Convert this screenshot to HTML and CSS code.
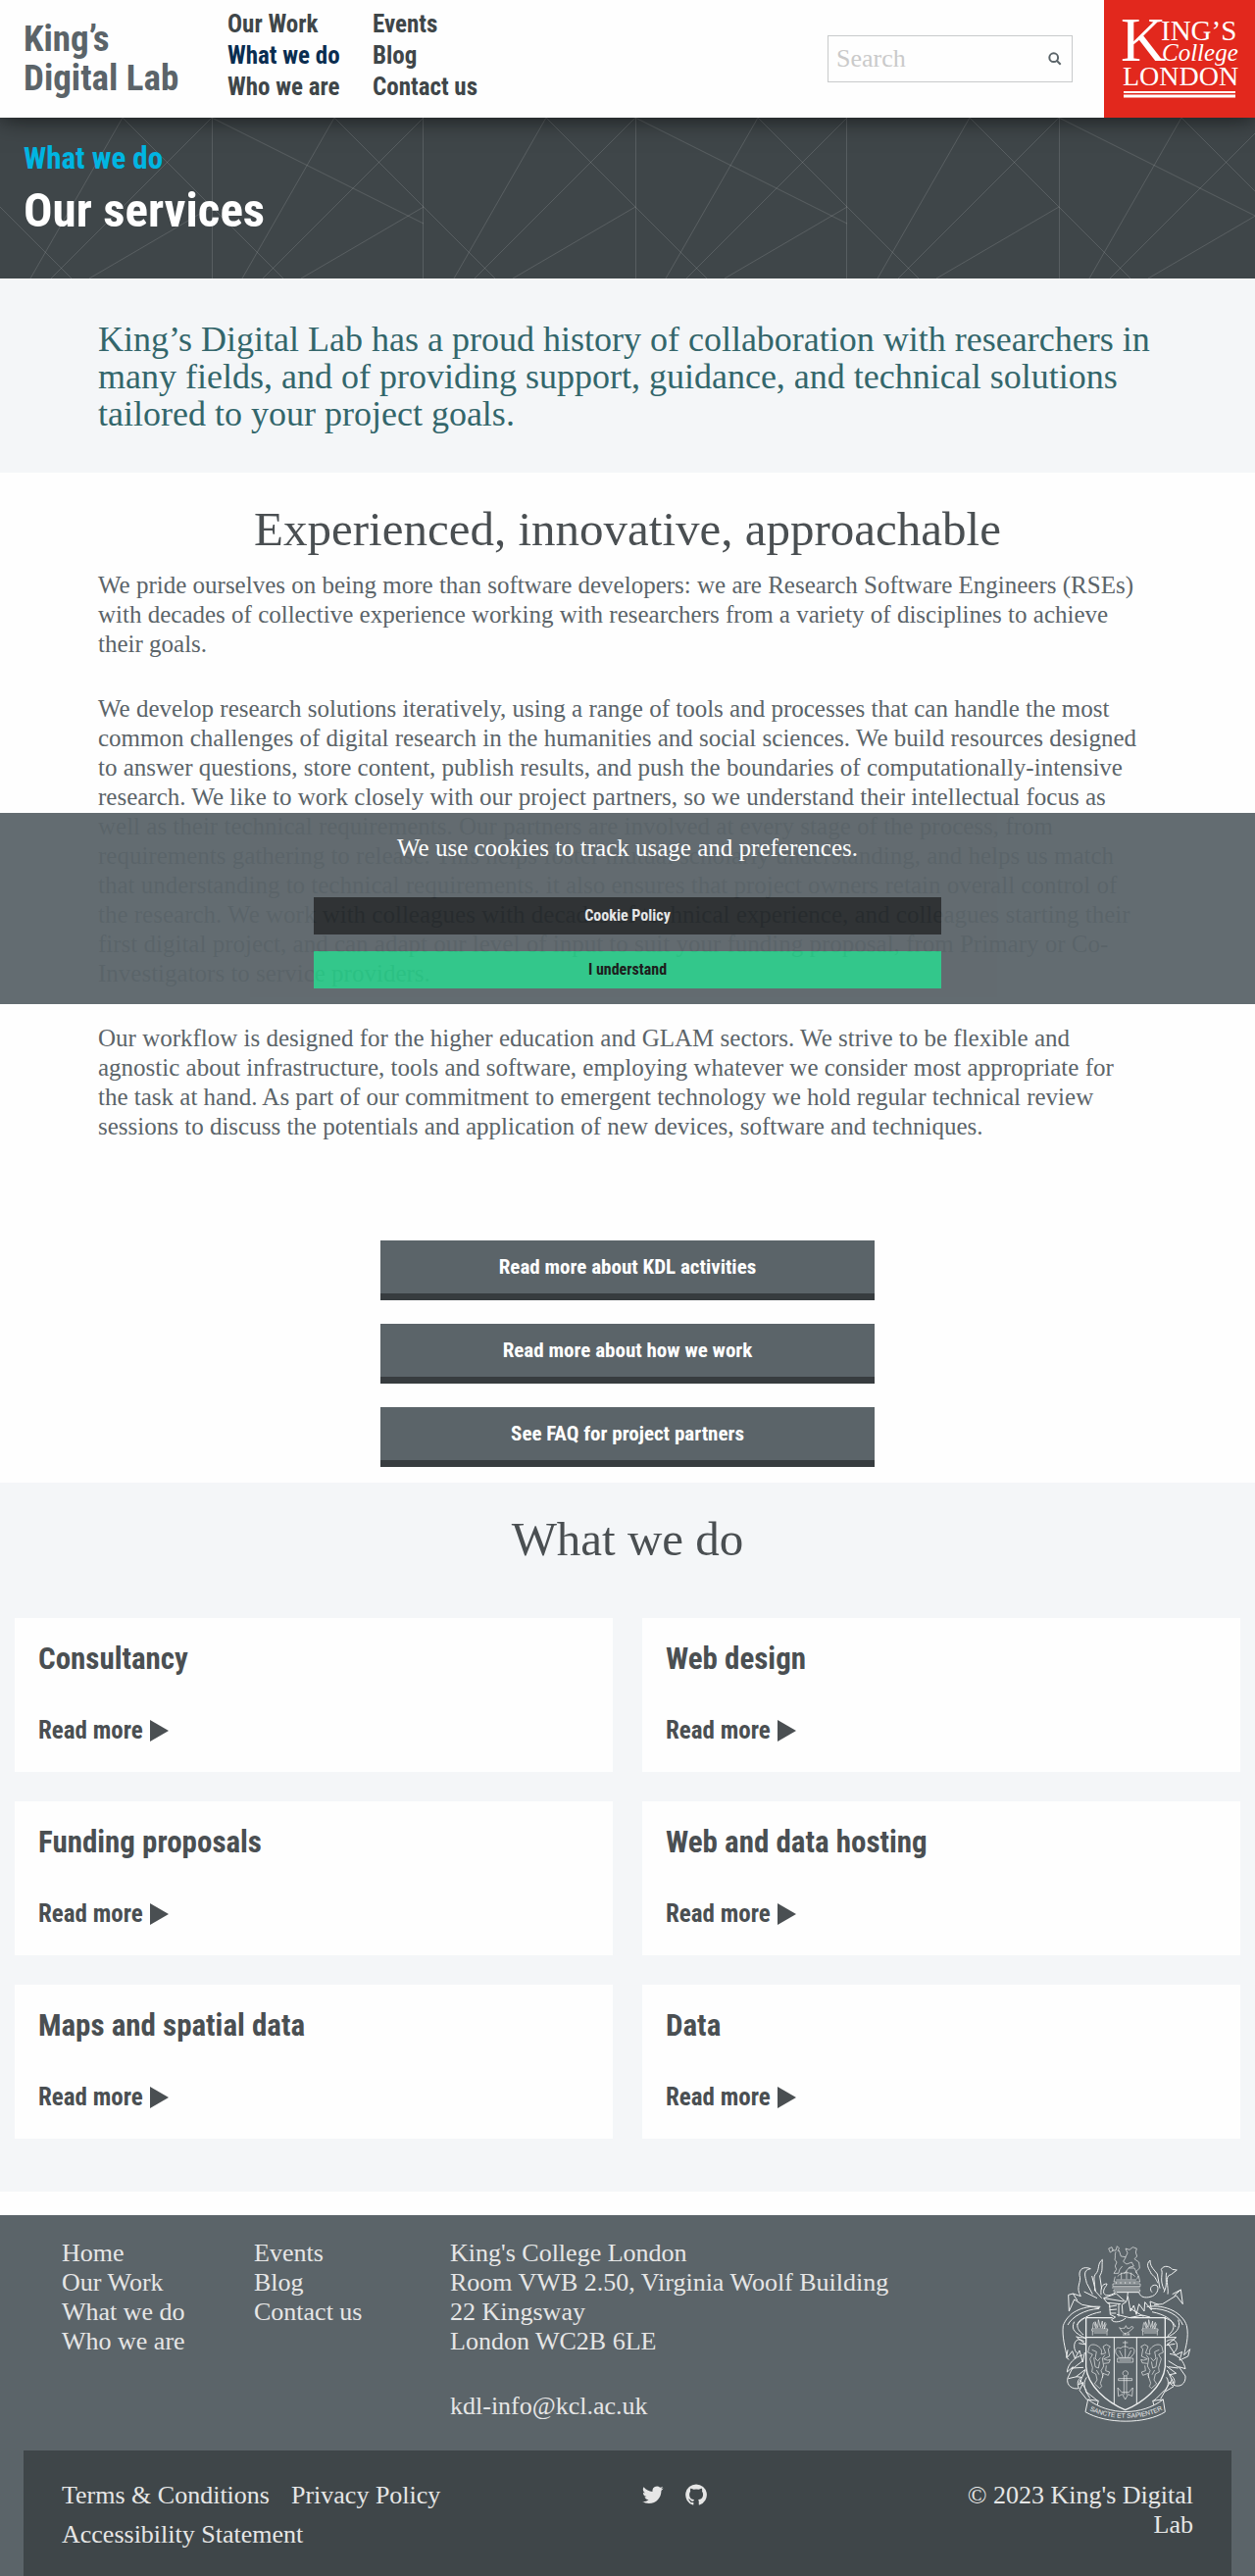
FILE: index.html
```html
<!DOCTYPE html>
<html lang="en">
<head>
<meta charset="utf-8">
<meta name="viewport" content="width=device-width, initial-scale=1">
<title>Our services | King’s Digital Lab</title>
<link rel="stylesheet" href="styles.css">
</head>
<body>
<header class="site-header">
  <a class="brand" href="#">King’s<br>Digital Lab</a>
  <nav class="main-nav" aria-label="Main">
    <ul>
      <li><a href="#">Our Work</a></li>
      <li><a class="current" href="#" aria-current="page">What we do</a></li>
      <li><a href="#">Who we are</a></li>
    </ul>
    <ul>
      <li><a href="#">Events</a></li>
      <li><a href="#">Blog</a></li>
      <li><a href="#">Contact us</a></li>
    </ul>
  </nav>
  <form class="search" role="search">
    <input type="search" placeholder="Search" aria-label="Search">
    <button type="submit" aria-label="Submit search">
      <svg width="14" height="14" viewBox="0 0 14 14" aria-hidden="true"><circle cx="5.7" cy="5.7" r="4.4"/><path d="M9 9l3.7 3.7"/></svg>
    </button>
  </form>
  <a class="college" href="#" aria-label="King’s College London">
    <svg viewBox="0 0 154 120" aria-hidden="true">
      <text x="17" y="62" font-size="64">K</text>
      <text x="58" y="41" font-size="29">ING’S</text>
      <text x="59" y="62" font-size="25" font-style="italic">College</text>
      <text x="19" y="87" font-size="28">LONDON</text>
      <path d="M20 94h114" stroke="#fff" stroke-width="2"/>
      <path d="M20 98h114" stroke="#fff" stroke-width="3"/>
    </svg>
  </a>
</header>

<main>
  <div class="banner">
    <a class="crumb" href="#">What we do</a>
    <h1>Our services</h1>
  </div>

  <section class="intro">
    <p>King’s Digital Lab has a proud history of collaboration with researchers in many fields, and of providing support, guidance, and technical solutions tailored to your project goals.</p>
  </section>

  <section class="story">
    <h2>Experienced, innovative, approachable</h2>
    <p>We pride ourselves on being more than software developers: we are Research Software Engineers (RSEs) with decades of collective experience working with researchers from a variety of disciplines to achieve their goals.</p>
    <p>We develop research solutions iteratively, using a range of tools and processes that can handle the most common challenges of digital research in the humanities and social sciences. We build resources designed to answer questions, store content, publish results, and push the boundaries of computationally-intensive research. We like to work closely with our project partners, so we understand their intellectual focus as well as their technical requirements. Our partners are involved at every stage of the process, from requirements gathering to release. This helps foster mutual scholarly understanding, and helps us match that understanding to technical requirements. it also ensures that project owners retain overall control of the research. We work with colleagues with decades of technical experience, and colleagues starting their first digital project, and can adapt our level of input to suit your funding proposal, from Primary or Co-Investigators to service providers.</p>
    <p>Our workflow is designed for the higher education and GLAM sectors. We strive to be flexible and agnostic about infrastructure, tools and software, employing whatever we consider most appropriate for the task at hand. As part of our commitment to emergent technology we hold regular technical review sessions to discuss the potentials and application of new devices, software and techniques.</p>
    <div class="actions">
      <a href="#">Read more about KDL activities</a>
      <a href="#">Read more about how we work</a>
      <a href="#">See FAQ for project partners</a>
    </div>
  </section>

  <section class="services">
    <h2>What we do</h2>
    <div class="cards">
      <article><h3>Consultancy</h3><a href="#">Read more <svg viewBox="0 0 19 22" aria-hidden="true"><path d="M0 0l19 11L0 22z"/></svg></a></article>
      <article><h3>Web design</h3><a href="#">Read more <svg viewBox="0 0 19 22" aria-hidden="true"><path d="M0 0l19 11L0 22z"/></svg></a></article>
      <article><h3>Funding proposals</h3><a href="#">Read more <svg viewBox="0 0 19 22" aria-hidden="true"><path d="M0 0l19 11L0 22z"/></svg></a></article>
      <article><h3>Web and data hosting</h3><a href="#">Read more <svg viewBox="0 0 19 22" aria-hidden="true"><path d="M0 0l19 11L0 22z"/></svg></a></article>
      <article><h3>Maps and spatial data</h3><a href="#">Read more <svg viewBox="0 0 19 22" aria-hidden="true"><path d="M0 0l19 11L0 22z"/></svg></a></article>
      <article><h3>Data</h3><a href="#">Read more <svg viewBox="0 0 19 22" aria-hidden="true"><path d="M0 0l19 11L0 22z"/></svg></a></article>
    </div>
  </section>
</main>

<footer class="site-footer">
  <div class="footer-top">
    <ul>
      <li><a href="#">Home</a></li>
      <li><a href="#">Our Work</a></li>
      <li><a href="#">What we do</a></li>
      <li><a href="#">Who we are</a></li>
    </ul>
    <ul>
      <li><a href="#">Events</a></li>
      <li><a href="#">Blog</a></li>
      <li><a href="#">Contact us</a></li>
    </ul>
    <address>
      <p>King's College London<br>Room VWB 2.50, Virginia Woolf Building<br>22 Kingsway<br>London WC2B 6LE</p>
      <p><a href="#">kdl-info@kcl.ac.uk</a></p>
    </address>
    <svg class="crest" viewBox="40 26 396 546" role="img" aria-label="King’s College London coat of arms">
      <!-- lion crest and crown -->
      <path class="fine" d="M183 38l10-4 4 10-9 6zM193 44h12l4-13 6 6-4 10M205 48c-4 10 0 14-3 24l6 8-5 12 4 10-8 12h14l4-12 8-10M215 44l6 18 14 2 6-12-6-14 12 4 10-8 12 4-3 12 4 12-8 8M236 64l-8 14 10 8 16-6 6 12-14 4-16 20M262 70l14 10 2 18-12 12 8 10-4 12M244 98h18l8 16M210 124c12-16 42-16 54 0M222 112v20M238 106v26M252 112v20M206 134h62"/>
      <path class="fine" d="M203 124l-4 16h80l-4-18M196 146h84v8h-84zM193 158h86M199 164h80v6h-80zM206 140v6M220 140v6M234 140v6M248 140v6M262 140v6"/>
      <!-- helmet -->
      <path d="M208 172h68M206 176l-38 14 10 14 8 4 2 32 16 8-12 8c6 12 34 6 44-6M168 190l62 10M178 204l42 4M206 176l30 26M184 216l24-4M186 226l22-2M188 236l18 0M236 202c6-10 4-18 6-30M236 202l-12 8 2 28M214 208v38"/>
      <path d="M276 172c4 16 20 18 34 14M242 184l8 46 10-18 8 28 8-32 16 22 2-28 20 24-4-26 26 10M250 222l40 24M208 240l40 10M246 250l40-8 24 6"/>
      <!-- mantling, dexter -->
      <path d="M204 172c-16 12-32 12-36 2-2-16 10-20 10-28-14 0-20 10-18 34M164 72c-18 14-6 30-22 46-8 12 2 30-2 50M164 72c-2 26 2 34-8 50l6 40M128 100c-20-8-36 0-34 20 8 20-14 36 4 64M128 100c-26 4-16 24-12 44l18 34M132 122l12 48 18 20M98 184l-24-8-14 4 2 50 16-36 24 16 54 10M74 176l14 22M148 190l-40-20M158 216c-60-4-100 20-114 58-4 34 6 66 12 98l16-20 8 22 14-24 10 36 6-30M154 222c-44 2-84 26-96 50M160 232c-36 6-60 22-74 40M110 250c-26 10-32 30-4 52M78 262c-12 24 4 36 34 50-10-2-22-2-28-4l30 24-22-4M108 322c-30-20-38 20-22 36M62 378l-8-6 4-24"/>
      <path d="M104 364c-24 6-46 26-48 52l18-16-16 34c-6 24 16 36 34 32-6-14-4-28 8-34l-16-2 28-22M106 380l-36 28M112 410l-20 44 14-6-12 24 24 30M116 432c-10 14-8 28-2 44l12 20M96 440l20 34M112 474l30 24 8 6M72 404l34-2M60 436l26-6"/>
      <!-- mantling, sinister -->
      <path d="M310 186c24-4 30-32 18-36-14-2-22 12-12 22M310 74c-16 14-2 28 4 42 14 10 16 22 20 28M310 74c0 18 8 24 22 42l8 44M344 102c8-14 26-10 34 0l14 2-18 14c-22 2-6 40-10 60M344 102c8 12-8 30 10 64M360 112c-4 20 4 38-8 60M378 178l26-14 6 44-20-26-42 26-26 2M404 164l-20 18M300 216c60-8 110 20 122 58 8 36-4 66-8 90l18-18-6 22-26 12 8-26-20 10-24-36M310 222c52-2 90 22 100 50M316 232c40 8 62 24 72 46M352 250c34 8 40 34 12 54M396 256c10 26-8 44-38 54l32 0-30 24 26-4M360 322c32-20 44 22 20 36"/>
      <path d="M370 360c30 4 44 26 48 46l-20-6 20 28c2 24-16 36-36 28 8-14-2-28-12-32l20-4-30-22M366 382l32 20M362 410l20 40-14-2 14 12-26 16M360 432c10 14 4 30-4 42l-14 24M378 438l-24 36M354 472l-26 26-8 6M396 404l-30-4"/>
      <!-- shield -->
      <path class="bold" d="M115 250h80M250 250h106v150c-6 62-70 110-122 132-56-24-116-74-120-132V250M115 310h241"/>
      <path d="M200 310v204M269 310v204"/>
      <path class="fine" d="M132 284h48v6h-48zM134 290v14M178 290v14M138 296h38M134 284c2-10 0-14 4-20l6 18M146 282l-4-20 8 18 2-24 6 24 6-20v22l8-18-2 20 6-16M286 284h48v6h-48zM288 290v14M332 290v14M292 296h38M288 284c2-10 0-14 4-20l6 18M300 282l-4-20 8 18 2-24 6 24 6-20v22l8-18-2 20 6-16M216 280c6 6 10 0 16 2l4-8 4 8h8c4-8 12-6 10 0l-14 12c-10 6-16 4-20-2zM226 302h22M234 296v6M244 296v6"/>
      <path class="fine" d="M206 360c-6-16 4-22 14-16 4-8 20-8 26 0 12-6 20 2 14 16l-10 12h-34zM210 374h48v12h-48zM226 326h16M234 320v22M234 344v28M216 350l10 20M252 350l-10 20M216 380h36M234 412a8 8 0 1 0 1 0M230 428v58M238 428v58M213 436h42v6h-42zM211 464l2 26 12-6 9 16 9-16 12 6 2-26-12 14h-22z"/>
      <path class="fine" d="M124 338c4-8 18-8 28 0 8 6 12 12 8 24l14-4-8-20 10-6 12 6-6 8 4 22-18 8 12 4 8-2-4 10-16 2M124 338l-4 18 14 6-8 14 8 26-2 14 12 6 4 18-8 12 16 14 6-6-4-10 8-24-6-14 8-14-4-24 8-10M132 348l14 6-4 20 8 8 8-10M138 372l4 28 10 4 4-20M146 410l8 14M176 396l-2 16 12 4-4 10-16-6-2 14"/>
      <g transform="translate(470 0) scale(-1 1)"><path class="fine" d="M124 338c4-8 18-8 28 0 8 6 12 12 8 24l14-4-8-20 10-6 12 6-6 8 4 22-18 8 12 4 8-2-4 10-16 2M124 338l-4 18 14 6-8 14 8 26-2 14 12 6 4 18-8 12 16 14 6-6-4-10 8-24-6-14 8-14-4-24 8-10M132 348l14 6-4 20 8 8 8-10M138 372l4 28 10 4 4-20M146 410l8 14M176 396l-2 16 12 4-4 10-16-6-2 14"/></g>
      <!-- motto ribbon -->
      <path d="M120 500c66 50 164 50 230 0l6 38c-60 38-180 38-244 0zM120 500l32 4-4 14M350 500l-32 4 4 14"/>
      <path id="motto" class="guide" d="M116 528c64 38 174 38 238 0"/>
      <text><textPath href="#motto" startOffset="10">SANCTE ET SAPIENTER</textPath></text>
    </svg>
  </div>
  <div class="footer-bottom">
    <div class="legal">
      <a href="#">Terms &amp; Conditions</a>
      <a href="#">Privacy Policy</a>
      <a href="#">Accessibility Statement</a>
    </div>
    <div class="social">
      <a href="#" aria-label="Twitter"><svg width="22" height="22" viewBox="0 0 24 24" aria-hidden="true"><path d="M23.6 4.9a9.600 9.600 0 0 1-2.800.8 4.900 4.900 0 0 0 2.100-2.700 9.600 9.600 0 0 1-3.100 1.200 4.900 4.900 0 0 0-8.300 4.400A13.700 13.700 0 0 1 1.700 3.600a4.900 4.900 0 0 0 1.500 6.500 4.800 4.800 0 0 1-2.200-.6 4.900 4.900 0 0 0 3.900 4.800 4.900 4.900 0 0 1-2.200.1 4.900 4.900 0 0 0 4.500 3.300A9.700 9.700 0 0 1 0 19.700a13.700 13.700 0 0 0 7.400 2.200c8.900 0 14-7.500 13.800-14.400a9.800 9.800 0 0 0 2.400-2.600z"/></svg></a>
      <a href="#" aria-label="GitHub"><svg width="22" height="22" viewBox="0 0 24 24" aria-hidden="true"><path d="M12 .5A11.800 11.800 0 0 0 8.300 23.500c.6.1.8-.3.8-.6v-2.200c-3.300.7-4-1.400-4-1.400-.5-1.400-1.300-1.700-1.300-1.700-1.100-.7.100-.7.100-.7 1.200.1 1.800 1.200 1.800 1.200 1.100 1.800 2.800 1.300 3.500 1 .1-.8.4-1.300.8-1.600-2.700-.3-5.500-1.300-5.500-5.900 0-1.300.5-2.400 1.200-3.200-.1-.3-.5-1.500.1-3.200 0 0 1-.3 3.300 1.200a11.500 11.500 0 0 1 6 0c2.300-1.500 3.300-1.200 3.300-1.200.6 1.700.2 2.900.1 3.200.8.8 1.200 1.900 1.200 3.200 0 4.600-2.800 5.600-5.500 5.900.4.4.8 1.100.8 2.200v3.200c0 .3.200.7.8.6A11.800 11.800 0 0 0 12 .5z"/></svg></a>
    </div>
    <p class="copyright">© 2023 King's Digital Lab</p>
  </div>
</footer>

<div class="cookies" role="region" aria-label="Cookie notice">
  <p>We use cookies to track usage and preferences.</p>
  <a href="#">Cookie Policy</a>
  <button type="button">I understand</button>
</div>
</body>
</html>
```
FILE: styles.css
```css
:root {
  --serif: "Liberation Serif", serif;
  --display: "Liberation Sans Narrow", "Arial Narrow", "Roboto Condensed", sans-serif;
  --slate: #5b6469;
  --dark: #3f4649;
  --ink: #4a4f52;
  --pale: #f4f6f8;
}

* { box-sizing: border-box; }

body {
  margin: 0;
  position: relative;
  background: #fefefe;
  color: var(--slate);
  font: 25px/30px var(--serif);
}

h1, h2, h3, p, ul { margin: 0; padding: 0; }
ul { list-style: none; }
a { color: inherit; text-decoration: none; }

/* Header */
.site-header {
  position: relative;
  display: flex;
  align-items: center;
  height: 120px;
  background: #fefefe;
  box-shadow: 0 0 24px rgba(0, 0, 0, .7);
  font-family: var(--display);
  font-weight: bold;
}
.brand {
  width: 208px;
  margin-left: 24px;
  font-size: 37px;
  line-height: 40px;
  color: var(--slate);
}
.main-nav {
  display: flex;
  font-size: 25px;
  line-height: 32px;
  color: var(--dark);
  padding-bottom: 6px;
}
.main-nav ul:first-child { width: 148px; }
.main-nav .current { color: #0a2d50; }
.search {
  display: flex;
  align-items: center;
  width: 250px;
  height: 48px;
  margin: 0 32px 0 auto;
  border: 1px solid #c8cacb;
}
.search input {
  flex: 1;
  min-width: 0;
  padding: 0 8px;
  border: 0;
  background: none;
  font: 26px/30px var(--serif);
}
.search input::placeholder { color: #cacaca; opacity: 1; }
.search button {
  display: flex;
  padding: 0 10px;
  border: 0;
  background: none;
}
.search svg { fill: none; stroke: var(--slate); stroke-width: 2; }
.college { width: 154px; height: 120px; background: #e2281d; }
.college svg { display: block; font-family: var(--serif); font-weight: normal; fill: #fff; }

/* Page banner */
.banner {
  height: 164px;
  padding: 24px 24px 0;
  background: var(--dark) url("data:image/svg+xml,%3Csvg xmlns='http://www.w3.org/2000/svg' width='432' height='164' fill='none' stroke='%23fff' stroke-opacity='.13'%3E%3Cpath d='M216.500 0V164M431.500 0V164M125 0L31 164M125 0L289 164M216 0L52 164M216 91L91 164M341 0L247 164M341 0L432 91M0 91L73 164M432 0L268 164M432 91L307 164M216 0L432 108'/%3E%3C/svg%3E") repeat-x;
  font-family: var(--display);
  font-weight: bold;
}
.crumb { display: block; font-size: 31px; line-height: 36px; color: #00b5e2; }
.banner h1 { font-size: 49px; line-height: 70px; color: #fff; }

/* Intro */
.intro { padding: 43px 100px 41px; background: var(--pale); }
.intro p { font-size: 36px; line-height: 38px; color: #33666b; }

/* Story */
.story { padding: 31px 100px 16px; }
h2 { font-size: 49px; line-height: 54px; font-weight: normal; text-align: center; color: var(--ink); }
.story h2 { margin-bottom: 15px; }
.story p { max-width: 1070px; margin-bottom: 36px; }
.actions { display: grid; gap: 24px; width: 504px; margin: 101px auto 0; }
.actions a {
  padding: 12px 0;
  border-bottom: 7px solid #373c3f;
  background: var(--slate);
  color: #fff;
  font: bold 21px/30px var(--display);
  text-align: center;
}

/* Services */
.services { padding: 31px 15px 54px; background: var(--pale); }
.services h2 { margin-bottom: 53px; }
.cards { display: grid; grid-template-columns: 1fr 1fr; gap: 30px; }
.cards article {
  padding: 22px 24px 22px;
  background: #fefefe;
  color: var(--ink);
  font-family: var(--display);
}
.cards h3 { margin-bottom: 33px; font-size: 31px; line-height: 40px; }
.cards a { display: flex; align-items: center; gap: 7px; font: bold 25px/40px var(--display); }
.cards svg { width: 19px; height: 22px; fill: var(--ink); }

/* Footer */
.site-footer {
  margin-top: 24px;
  padding: 24px 24px 0;
  background: var(--slate);
  color: #e6e6e6;
  font-size: 26px;
}
.footer-top {
  display: grid;
  grid-template-columns: 196px 200px 1fr auto;
  min-height: 216px;
  padding: 0 41px 0 39px;
}
.footer-top address { font-style: normal; }
.footer-top address p + p { margin-top: 36px; }
.crest {
  width: 132px;
  height: 182px;
  margin-top: 6px;
  fill: none;
  stroke: #eef0f0;
  stroke-width: 3;
  stroke-linejoin: round;
}
.crest .fine { stroke-width: 2; }
.crest .bold { stroke-width: 4; }
.crest .guide { stroke: none; }
.crest text { font: 20px "Liberation Sans", sans-serif; fill: #eef0f0; stroke: none; }
.footer-bottom {
  display: grid;
  grid-template-columns: 1fr 96px 1fr;
  min-height: 128px;
  padding: 26px 39px 0;
  background: var(--dark);
}
.legal { display: flex; flex-wrap: wrap; column-gap: 22px; align-content: flex-start; line-height: 40px; max-width: 420px; }
.social { display: flex; gap: 22px; margin-left: 63px; padding-top: 8px; }
.social svg { display: block; fill: #e6e6e6; }
.copyright { width: 260px; margin: 5px 0 0 auto; text-align: right; }

/* Cookie notice, laid over the page at the foot of the first screen */
.cookies {
  position: absolute;
  top: 829px;
  left: 0;
  right: 0;
  display: grid;
  grid-template-columns: 50%;
  justify-content: center;
  padding: 21px 0 16px;
  background: var(--slate);
  color: #fff;
  opacity: .95;
  text-align: center;
}
.cookies p { margin-bottom: 35px; }
.cookies a, .cookies button {
  margin-bottom: 17px;
  padding: 0;
  border: 0;
  font: bold 16px/38px var(--display);
}
.cookies a { background: #25292b; color: #e6e6e6; }
.cookies button { margin-bottom: 0; background: #29c585; color: #111; }
```
